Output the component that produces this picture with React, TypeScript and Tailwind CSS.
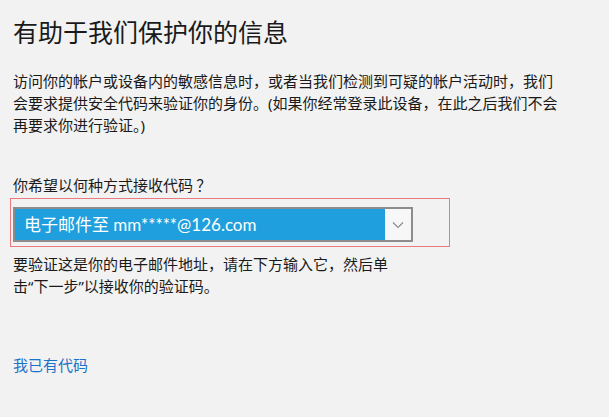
export default function App() {
  return (
    <div className="min-h-[417px] w-[609px] bg-[#f2f2f2] pl-[13px] pt-[16px] text-[#1a1a1a] font-['Noto_Sans','Noto_Sans_CJK_SC',sans-serif]">
      <h1 className="text-[25px] leading-[32px] font-normal text-[#1a1a1a]">有助于我们保护你的信息</h1>

      <p className="mt-[22px] w-[550px] text-[15px] leading-[22px]">
        访问你的帐户或设备内的敏感信息时，或者当我们检测到可疑的帐户活动时，我们会要求提供安全代码来验证你的身份。(如果你经常登录此设备，在此之后我们不会再要求你进行验证。)
      </p>

      <p className="mt-[38px] text-[15px] leading-[22px] font-['Noto_Sans_CJK_SC',sans-serif]">你希望以何种方式接收代码 ？</p>

      <div className="ml-[-3px] mt-[2px] w-[440px] border border-[#e8797c] pb-[4px] pl-[2px] pt-[8px]">
        <div className="flex h-[35px] w-[400px] border-2 border-[#8c8c8c]">
          <div className="flex flex-1 items-center bg-[#1f9fdd] pl-[9px] text-[17px] text-white font-['Lato','Noto_Sans_CJK_SC',sans-serif]">
            电子邮件至 mm*****@126.com
          </div>
          <div className="flex w-[26px] items-center justify-center bg-[#f7f7f7]">
            <svg width="12" height="8" viewBox="0 0 12 8" fill="none">
              <path d="M1 1.5 L6 6.5 L11 1.5" stroke="#8a8a8a" strokeWidth="1.1" />
            </svg>
          </div>
        </div>
      </div>

      <p className="mt-[6px] w-[400px] text-[15px] leading-[22px]">
        要验证这是你的电子邮件地址，请在下方输入它，然后单击“下一步”以接收你的验证码。
      </p>

      <a href="#" className="mt-[57px] block text-[15px] leading-[22px] text-[#1b73c8]">
        我已有代码
      </a>
    </div>
  );
}
